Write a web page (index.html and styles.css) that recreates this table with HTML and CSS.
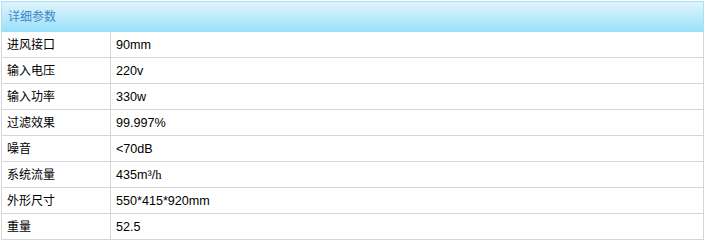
FILE: index.html
```html
<!DOCTYPE html>
<html>
<head>
<meta charset="utf-8">
<link rel="stylesheet" href="styles.css">
</head>
<body>
<div class="panel">
  <div class="head">详细参数</div>
  <table class="params">
    <tr><td class="k">进风接口</td><td class="v">90mm</td></tr>
    <tr><td class="k">输入电压</td><td class="v">220v</td></tr>
    <tr><td class="k">输入功率</td><td class="v">330w</td></tr>
    <tr><td class="k">过滤效果</td><td class="v">99.997%</td></tr>
    <tr><td class="k">噪音</td><td class="v">&lt;70dB</td></tr>
    <tr><td class="k">系统流量</td><td class="v">435m³/<span class="serif">h</span></td></tr>
    <tr><td class="k">外形尺寸</td><td class="v">550*415*920mm</td></tr>
    <tr><td class="k">重量</td><td class="v">52.5</td></tr>
  </table>
</div>
</body>
</html>
```
FILE: styles.css
```css
html, body { margin: 0; padding: 0; background: #fff; }
body {
  font-family: "Liberation Sans", Arial, "Noto Sans CJK SC", sans-serif;
  font-size: 12px;
  color: #000;
}
.panel {
  margin: 1px 0 0 1px;
  width: 703px;
}
.head {
  height: 30px;
  line-height: 31px;
  padding-left: 6px;
  border: 1px solid #a6e1f6;
  border-bottom: none;
  background: linear-gradient(to bottom, #e1f4fc 0%, #98e0fa 100%);
  color: #3f86c8;
  font-size: 12px;
}
.params {
  width: 703px;
  border-collapse: collapse;
  table-layout: fixed;
}
.params td {
  border: 1px solid #d6d6d6;
  height: 24px;
  padding: 1px 0 0 5px;
  vertical-align: middle;
  white-space: nowrap;
  line-height: 16px;
}
.params tr:first-child td { border-top: none; }
.params td.k { width: 103px; }
.params td.v { font-size: 12.6px; }
.serif { font-family: "Liberation Serif", serif; }
```
